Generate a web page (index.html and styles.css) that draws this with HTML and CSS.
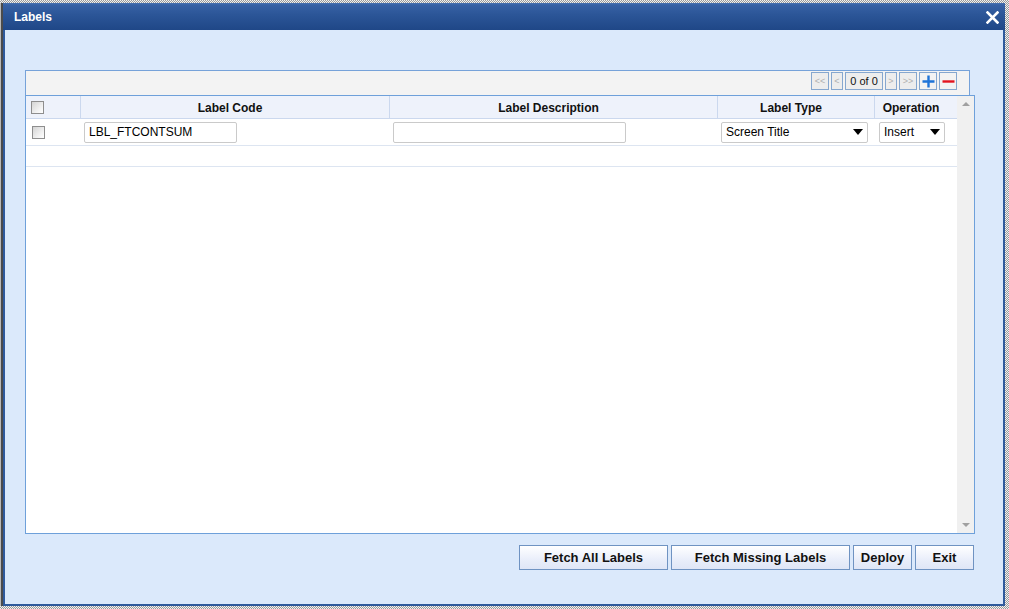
FILE: index.html
```html
<!DOCTYPE html>
<html>
<head>
<meta charset="utf-8">
<title>Labels</title>
<link rel="stylesheet" href="styles.css">
</head>
<body>
<div class="screen">
  <div class="leftbar"></div>
  <div class="window">
    <div class="titlebar">
      <span class="title">Labels</span>
      <svg class="close" width="13" height="13" viewBox="0 0 13 13"><path d="M1.5 1.5 L11.5 11.5 M11.5 1.5 L1.5 11.5" stroke="#fff" stroke-width="2.6" stroke-linecap="square"/></svg>
    </div>
    <div class="content">
      <div class="panel">
        <div class="toolbar">
          <span class="pbtn w18 dis">&lt;&lt;</span>
          <span class="pbtn w12 dis">&lt;</span>
          <span class="pbtn pcount">0 of 0</span>
          <span class="pbtn w13 dis">&gt;</span>
          <span class="pbtn w18 dis">&gt;&gt;</span>
          <span class="pbtn w19 add"><svg width="13" height="13" viewBox="0 0 13 13"><path d="M6.5 0.5 V12.5 M0.5 6.5 H12.5" stroke="#1f74d8" stroke-width="2.4"/></svg></span>
          <span class="pbtn w19 del"><svg width="13" height="13" viewBox="0 0 13 13"><path d="M0.5 6.5 H12.5" stroke="#e3141e" stroke-width="2.4"/></svg></span>
        </div>
        <div class="grid">
          <div class="table">
            <div class="hrow">
              <div class="c chk"><span class="cbox"></span></div>
              <div class="c code">Label Code</div>
              <div class="c desc">Label Description</div>
              <div class="c type">Label Type</div>
              <div class="c op">Operation</div>
            </div>
            <div class="drow">
              <div class="c chk"><span class="cbox"></span></div>
              <div class="c code"><span class="input in-code">LBL_FTCONTSUM</span></div>
              <div class="c desc"><span class="input in-desc"></span></div>
              <div class="c type"><span class="input sel sel-type">Screen Title<i class="tri"></i></span></div>
              <div class="c op"><span class="input sel sel-op">Insert<i class="tri"></i></span></div>
            </div>
            <div class="erow"></div>
          </div>
          <div class="scroll">
            <i class="up"></i>
            <i class="down"></i>
          </div>
        </div>
      </div>
      <div class="buttons">
        <span class="btn b1">Fetch All Labels</span>
        <span class="btn b2">Fetch Missing Labels</span>
        <span class="btn b3">Deploy</span>
        <span class="btn b4">Exit</span>
      </div>
    </div>
  </div>
</div>
</body>
</html>
```
FILE: styles.css
```css
html, body {
  margin: 0;
  padding: 0;
}
body {
  width: 1009px;
  height: 609px;
  overflow: hidden;
  font-family: "Liberation Sans", Arial, sans-serif;
  background-color: #c8c8c8;
  background-image: repeating-conic-gradient(#9a9a9a 0 25%, #f2f2f2 0 50%);
  background-size: 2px 2px;
}
.screen {
  display: flex;
  height: 603px;
  padding: 3px 0 3px 0;
}
.leftbar {
  flex: 0 0 auto;
  width: 2px;
  border-left: 1px solid #b8b8b8;
  background: #4b4b4b;
}
.window {
  flex: 0 0 auto;
  width: 1002px;
  box-sizing: border-box;
  display: flex;
  flex-direction: column;
  background: #dbe9fb;
  border: 2px solid #2f5a9c;
  border-top: 0;
}
.titlebar {
  flex: 0 0 auto;
  height: 27px;
  margin: 0 -2px;
  display: flex;
  align-items: center;
  justify-content: space-between;
  padding: 0 6px 0 11px;
  background: linear-gradient(#4a73b0 0, #3761a4 2px, #2b5597 45%, #1f4787 100%);
  box-sizing: border-box;
}
.title {
  color: #fff;
  font-weight: bold;
  font-size: 12px;
  margin-top: 1px;
}
.close {
  display: block;
  margin-top: 1px;
}
.content {
  flex: 1;
  padding: 40px 0 0 20px;
}
.panel {
  display: flex;
  flex-direction: column;
  width: 950px;
}
.toolbar {
  width: 945px;
  height: 25px;
  box-sizing: border-box;
  border: 1px solid #76a2d9;
  border-bottom: 0;
  background: #f3f3f3;
  display: flex;
  align-items: flex-start;
  justify-content: flex-end;
  padding: 1px 12px 0 0;
  gap: 2px;
}
.pbtn {
  flex: 0 0 auto;
  height: 18px;
  box-sizing: border-box;
  border: 1px solid #86a7cf;
  background: #ededed;
  font-size: 9px;
  color: #b0b0b0;
  display: flex;
  align-items: center;
  justify-content: center;
}
.w18 { width: 18px; }
.w12 { width: 12px; }
.w13 { width: 12px; }
.w19 { width: 18px; background: #f3f3f3; }
.pcount {
  width: 38px;
  color: #111;
  font-size: 11px;
}
.grid {
  display: flex;
  height: 439px;
  box-sizing: border-box;
  border: 1px solid #6ea0da;
  background: #fff;
}
.table {
  flex: 0 0 auto;
  width: 931px;
}
.hrow {
  display: flex;
  height: 23px;
  box-sizing: border-box;
  background: #eef2fb;
  border-bottom: 1px solid #cbd8ee;
}
.hrow .c {
  border-right: 1px solid #cbd8ee;
  font-weight: bold;
  font-size: 12px;
  color: #111;
  display: flex;
  align-items: center;
  justify-content: center;
  padding: 1px 10px 0 0;
}
.hrow .c:last-child { border-right: 0; }
.c { box-sizing: border-box; flex: 0 0 auto; }
.chk { width: 55px; }
.code { width: 309px; }
.desc { width: 328px; }
.type { width: 157px; }
.op { width: 82px; }
.hrow .chk { justify-content: flex-start; padding: 0 0 0 5px; }
.cbox {
  display: block;
  width: 13px;
  height: 13px;
  box-sizing: border-box;
  border: 1px solid #8e8e8e;
  background: linear-gradient(135deg, #d4d4d4, #f4f4f4 70%, #fff);
}
.drow {
  display: flex;
  height: 27px;
  box-sizing: border-box;
  border-bottom: 1px solid #dde5f1;
  align-items: center;
}
.drow .chk { padding-left: 6px; }
.drow .code, .drow .desc, .drow .type { padding-left: 3px; }
.drow .op { padding-left: 4px; }
.input {
  display: flex;
  align-items: center;
  height: 21px;
  box-sizing: border-box;
  border: 1px solid #cacaca;
  border-radius: 2px;
  background: #fff;
  font-size: 12px;
  color: #000;
  padding-left: 4px;
}
.in-code { width: 153px; }
.in-desc { width: 233px; }
.sel {
  justify-content: space-between;
  padding-right: 4px;
}
.sel-type { width: 147px; }
.sel-op { width: 66px; }
.tri {
  width: 0;
  height: 0;
  border-left: 5px solid transparent;
  border-right: 5px solid transparent;
  border-top: 6px solid #000;
}
.erow {
  height: 21px;
  box-sizing: border-box;
  border-bottom: 1px solid #dde5f1;
}
.scroll {
  flex: 1;
  background: #f0f0f0;
  display: flex;
  flex-direction: column;
  justify-content: space-between;
  align-items: center;
  padding: 6px 0 6px 1px;
  box-sizing: border-box;
}
.up {
  width: 0;
  height: 0;
  border-left: 4px solid transparent;
  border-right: 4px solid transparent;
  border-bottom: 4px solid #a0a0a0;
}
.down {
  width: 0;
  height: 0;
  border-left: 4px solid transparent;
  border-right: 4px solid transparent;
  border-top: 4px solid #a0a0a0;
}
.buttons {
  display: flex;
  justify-content: flex-end;
  gap: 3px;
  width: 949px;
  margin-top: 11px;
}
.btn {
  flex: 0 0 auto;
  height: 25px;
  box-sizing: border-box;
  border: 1px solid #6f93c2;
  background: linear-gradient(#ffffff, #e9eefa 60%, #dfe6f6);
  font-weight: bold;
  font-size: 13px;
  color: #111;
  display: flex;
  align-items: center;
  justify-content: center;
}
.b1 { width: 149px; }
.b2 { width: 179px; }
.b3 { width: 59px; }
.b4 { width: 59px; }
```
